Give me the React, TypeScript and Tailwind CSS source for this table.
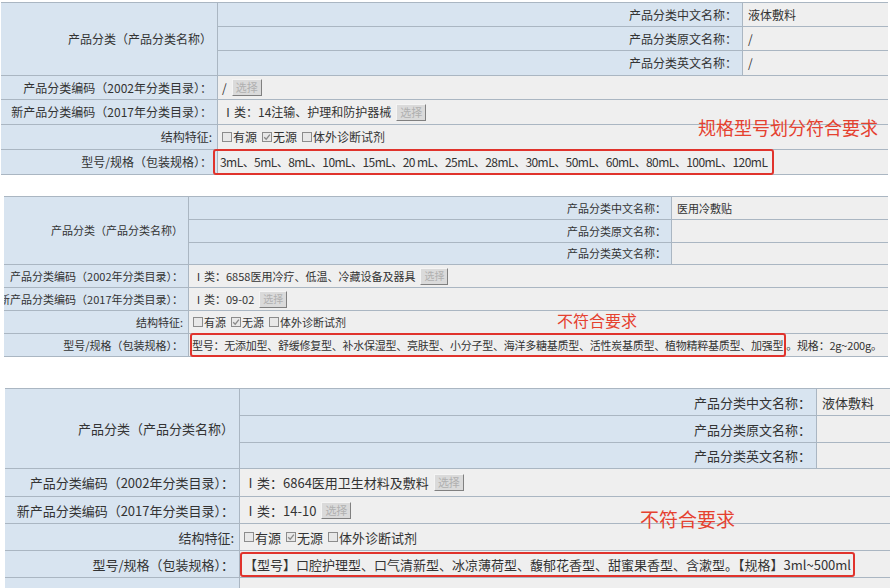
import type { ReactNode } from "react";

const line = "border-[#aab6c2]";

const Pick = ({ size }: { size: string }) => (
  <span
    className={`inline-flex items-center justify-center h-[17px] px-[3px] ml-[5px] bg-[#dadada] text-[#b0b0b0] ${size} leading-none border border-t-[#f4f4f4] border-l-[#f4f4f4] border-b-[#808080] border-r-[#808080]`}
  >
    选择
  </span>
);

const Box = ({ checked = false }: { checked?: boolean }) => (
  <span className="inline-flex items-center justify-center w-[10px] h-[10px] mr-[1px] border border-[#8c8c8c] bg-[#e8e8e8]">
    {checked && (
      <svg viewBox="0 0 8 8" className="w-[8px] h-[8px]">
        <path d="M1.2 4.2 L3.2 6.2 L6.9 1.6" stroke="#8a8a8a" strokeWidth="1.3" fill="none" />
      </svg>
    )}
  </span>
);

const Features = () => (
  <span className="flex items-center">
    <Box />
    <span>有源</span>
    <span className="w-[5px]" />
    <Box checked />
    <span>无源</span>
    <span className="w-[5px]" />
    <Box />
    <span>体外诊断试剂</span>
  </span>
);

type PanelProps = {
  frame: string;
  text: string;
  names: string[];
  rows: ReactNode[];
  note: ReactNode;
  extra?: boolean;
};

const lefts = [
  "产品分类编码（2002年分类目录）：",
  "新产品分类编码（2017年分类目录）：",
  "结构特征:",
  "型号/规格（包装规格）：",
];

const rights = ["产品分类中文名称：", "产品分类原文名称：", "产品分类英文名称："];

const Panel = ({ frame, text, names, rows, note, extra }: PanelProps) => (
  <div className={`relative grid border-t ${line} ${frame} ${text} text-[#333] whitespace-nowrap`}>
    <div className={`row-span-3 flex items-center justify-end overflow-hidden pr-[5px] bg-[#d8e4f0] border-r border-b ${line}`}>
      产品分类（产品分类名称）
    </div>
    {rights.map((label, i) => (
      <div key={label} className="contents">
        <div className={`col-start-2 flex items-center justify-end pr-[5px] bg-[#d8e4f0] border-r border-b ${line}`}>
          {label}
        </div>
        <div className={`flex items-center pl-[5px] bg-[#efefef] border-b ${line}`}>{names[i]}</div>
      </div>
    ))}
    {lefts.map((label, i) => (
      <div key={label} className="contents">
        <div className={`col-start-1 flex items-center justify-end overflow-hidden pr-[5px] bg-[#d8e4f0] border-r border-b ${line}`}>
          {label}
        </div>
        <div className={`col-span-2 flex items-center pl-[4px] bg-[#efefef] border-b ${line}`}>{rows[i]}</div>
      </div>
    ))}
    {extra && (
      <div className="contents">
        <div className={`col-start-1 bg-[#d8e4f0] border-r ${line}`} />
        <div className="col-span-2 bg-[#efefef]" />
      </div>
    )}
    {note}
  </div>
);

const redBox = "flex items-center border-2 border-[#e0332c] rounded-[3px]";

export default function App() {
  return (
    <div className="h-[588px] w-[894px] overflow-hidden bg-white font-['Noto_Sans_CJK_SC',sans-serif] leading-none">
      {/* 1 */}
      <div className="mt-[2px] ml-[1px] w-[887px]">
        <Panel
          frame="grid-cols-[217px_1fr_145px] grid-rows-[24px_24px_25px_24px_25px_25px_25px]"
          text="text-[12px]"
          names={["液体敷料", "/", "/"]}
          rows={[
            <>
              <span>/</span>
              <Pick size="text-[11px]" />
            </>,
            <>
              <span>Ⅰ类：14注输、护理和防护器械</span>
              <Pick size="text-[11px]" />
            </>,
            <Features />,
            <span className={`${redBox} h-[26px] -ml-[9px] pl-[5px] pr-[5px] tracking-[-0.55px]`}>
              3mL、5mL、8mL、10mL、15mL、20 mL、25mL、28mL、30mL、50mL、60mL、80mL、100mL、120mL
            </span>,
          ]}
          note={
            <span className="absolute left-[697px] top-[115px] text-[18px] text-[#e5412f]">规格型号划分符合要求</span>
          }
        />
      </div>

      {/* 2 */}
      <div className="mt-[21px] ml-[4px] w-[884px]">
        <Panel
          frame="grid-cols-[185px_1fr_216px] grid-rows-[23px_23px_22px_23px_23px_23px_23px]"
          text="text-[11px]"
          names={["医用冷敷贴", "", ""]}
          rows={[
            <>
              <span>Ⅰ类：6858医用冷疗、低温、冷藏设备及器具</span>
              <Pick size="text-[10px]" />
            </>,
            <>
              <span>Ⅰ类：09-02</span>
              <Pick size="text-[10px]" />
            </>,
            <Features />,
            <>
              <span className={`${redBox} h-[24px] -ml-[3px] pl-0 pr-[1px] tracking-[-0.25px]`}>
                型号：无添加型、舒缓修复型、补水保湿型、亮肤型、小分子型、海洋多糖基质型、活性炭基质型、植物精粹基质型、加强型
              </span>
              <span className="tracking-[-0.2px]">。规格：2g~200g。</span>
            </>,
          ]}
          note={<span className="absolute left-[553px] top-[115px] text-[16px] text-[#e5412f]">不符合要求</span>}
        />
      </div>

      {/* 3 */}
      <div className="mt-[31px] ml-[5px] w-[885px]">
        <Panel
          frame="grid-cols-[235px_1fr_73px] grid-rows-[27px_27px_26px_28px_27px_27px_27px_27px]"
          text="text-[13px]"
          names={["液体敷料", "", ""]}
          extra
          rows={[
            <>
              <span>Ⅰ类：6864医用卫生材料及敷料</span>
              <Pick size="text-[11px]" />
            </>,
            <>
              <span>Ⅰ类：14-10</span>
              <Pick size="text-[11px]" />
            </>,
            <Features />,
            <span className={`${redBox} h-[25px] -ml-[4px] pl-[2px] pr-[2px]`}>
              【型号】口腔护理型、口气清新型、冰凉薄荷型、馥郁花香型、甜蜜果香型、含漱型。【规格】3ml~500ml
            </span>,
          ]}
          note={<span className="absolute left-[635px] top-[120px] text-[19px] text-[#e5412f]">不符合要求</span>}
        />
      </div>
    </div>
  );
}
